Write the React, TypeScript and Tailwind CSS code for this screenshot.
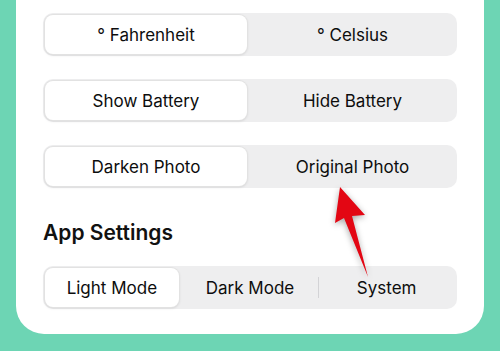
const rows: { options: string[]; selected: number }[] = [
  { options: ["° Fahrenheit", "° Celsius"], selected: 0 },
  { options: ["Show Battery", "Hide Battery"], selected: 0 },
  { options: ["Darken Photo", "Original Photo"], selected: 0 },
];

function Segmented({ options, selected }: { options: string[]; selected: number }) {
  return (
    <div className="flex h-[43px] rounded-[10px] bg-[#eeeeef] p-[2px]">
      {options.map((opt, i) => (
        <div key={opt} className="relative flex flex-1 items-center">
          {i > 0 && i - 1 !== selected && i !== selected && (
            <div className="absolute left-0 top-[9px] h-[21px] w-px bg-[#d3d3d6]" />
          )}
          <div
            className={
              i === selected
                ? "flex h-full flex-1 items-center justify-center rounded-[8px] bg-white pt-[2px] text-[17px] text-[#0d0d0d] shadow-[0_1px_3px_rgba(0,0,0,0.15)] ring-1 ring-[#e2e2e2] mr-[3px]"
                : "flex h-full flex-1 items-center justify-center pt-[2px] text-[17px] text-[#0d0d0d]"
            }
          >
            {opt}
          </div>
        </div>
      ))}
    </div>
  );
}

export default function App() {
  return (
    <div className="h-[351px] w-[500px] overflow-hidden bg-[#6dd5b4] px-4 font-['Inter',sans-serif]">
      <div className="relative rounded-b-[28px] bg-white px-[27px] pb-[25px] pt-[13px]">
        <div className="flex flex-col gap-[23px]">
          {rows.map((r) => (
            <Segmented key={r.options[0]} options={r.options} selected={r.selected} />
          ))}
        </div>
        <div className="flex h-[78px] items-center pt-[12px] text-[21px] font-semibold text-[#111]">
          App Settings
        </div>
        <Segmented options={["Light Mode", "Dark Mode", "System"]} selected={0} />

        {/* red pointer arrow */}
        <svg
          className="absolute left-[306px] top-[183px] drop-shadow-[0_2px_3px_rgba(0,0,0,0.35)]"
          width="60"
          height="100"
          viewBox="0 0 60 100"
        >
          <path d="M18 4 L13 40 L22 35 L46 94 L30 33 L43 32 Z" fill="#e30613" />
        </svg>
      </div>
    </div>
  );
}
